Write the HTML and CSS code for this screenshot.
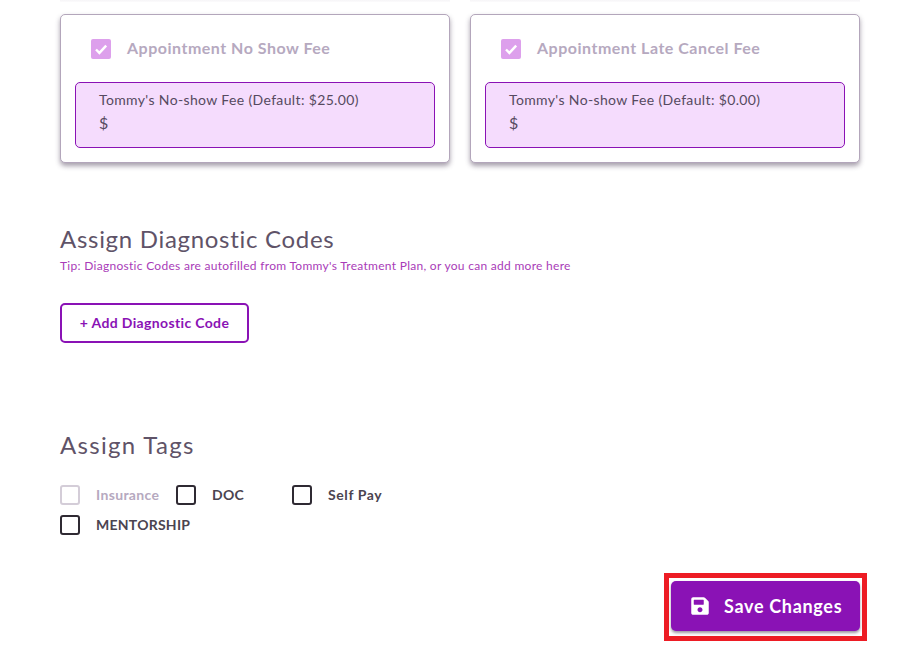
FILE: index.html
```html
<!DOCTYPE html>
<html lang="en">
<head>
<meta charset="utf-8">
<title>Appointment settings</title>
<link rel="stylesheet" href="styles.css">
</head>
<body>
<main class="page">
  <div class="fee-grid prev-row"><div class="prev-shadow"></div><div class="prev-shadow"></div></div>
  <section class="fee-grid">
    <div class="card">
      <div class="card-head">
        <span class="check"><svg viewBox="0 0 20 20" width="20" height="20"><path d="M5 10.500l3.400 3.400L15.200 6.600" fill="none" stroke="#fff" stroke-width="2.400"/></svg></span>
        <span class="card-title">Appointment No Show Fee</span>
      </div>
      <div class="fee-input">
        <div class="fee-label">Tommy's No-show Fee (Default: $25.00)</div>
        <div class="fee-value">$</div>
      </div>
    </div>
    <div class="card">
      <div class="card-head">
        <span class="check"><svg viewBox="0 0 20 20" width="20" height="20"><path d="M5 10.500l3.400 3.400L15.200 6.600" fill="none" stroke="#fff" stroke-width="2.400"/></svg></span>
        <span class="card-title">Appointment Late Cancel Fee</span>
      </div>
      <div class="fee-input">
        <div class="fee-label">Tommy's No-show Fee (Default: $0.00)</div>
        <div class="fee-value">$</div>
      </div>
    </div>
  </section>

  <section class="codes">
    <h2 class="heading">Assign Diagnostic Codes</h2>
    <p class="tip">Tip: Diagnostic Codes are autofilled from Tommy's Treatment Plan, or you can add more here</p>
    <button class="add-btn" type="button"><span class="add-label">+ Add Diagnostic Code</span></button>
  </section>

  <section class="tags">
    <h2 class="heading heading-tags">Assign Tags</h2>
    <div class="tag-list">
      <label class="tag tag-disabled"><span class="box"></span><span class="tag-text">Insurance</span></label>
      <label class="tag"><span class="box"></span><span class="tag-text">DOC</span></label>
      <label class="tag"><span class="box"></span><span class="tag-text tag-text-loose">Self Pay</span></label>
      <label class="tag tag-wide"><span class="box"></span><span class="tag-text">MENTORSHIP</span></label>
    </div>
  </section>

  <div class="actions">
    <div class="highlight">
      <button class="save-btn" type="button">
        <svg viewBox="0 0 448 512" width="18" height="20"><path fill="#fff" d="M433.900 129.900l-83.900-83.900A48 48 0 0 0 316.100 32H48C21.500 32 0 53.500 0 80v352c0 26.500 21.500 48 48 48h352c26.500 0 48-21.500 48-48V163.900a48 48 0 0 0-14.100-34zM224 416c-35.300 0-64-28.700-64-64 0-35.300 28.700-64 64-64s64 28.700 64 64c0 35.300-28.700 64-64 64zm96-304.500V212c0 6.600-5.400 12-12 12H76c-6.600 0-12-5.400-12-12V108c0-6.600 5.400-12 12-12h228.500c3.200 0 6.200 1.300 8.500 3.500l3.500 3.500c2.200 2.200 3.500 5.300 3.500 8.500z"/></svg>
        <span>Save Changes</span>
      </button>
    </div>
  </div>
</main>
</body>
</html>
```

FILE: styles.css
```css
* { box-sizing: border-box; }
html, body { margin: 0; background: #fff; }
body {
  font-family: "Lato", "Noto Sans", sans-serif;
  font-variant-ligatures: none;
  color: #5f5368;
  height: 670px;
  overflow: hidden;
}
.page {
  width: 918px;
  padding: 0 51px 0 60px;
}
.fee-grid {
  display: grid;
  grid-template-columns: 390px 390px;
  column-gap: 20px;
  width: 800px;
}
.prev-row {
  height: 2px;
  margin-bottom: 12px;
}
.prev-shadow {
  background: linear-gradient(#f6f5f7, #fcfbfc);
}
.card {
  height: 149px;
  background: #fff;
  border: 1px solid #b3a6bb;
  border-radius: 5px;
  box-shadow: 0 3px 5px rgba(60, 45, 70, 0.45);
  padding: 0 14px;
}
.card-head {
  display: flex;
  align-items: center;
  height: 67px;
  padding-left: 16px;
}
.check {
  width: 20px;
  height: 20px;
  border-radius: 2px;
  background: #dda0ec;
  display: block;
  margin-right: 16px;
}
.check svg { display: block; }
.card-title {
  font-size: 16px;
  line-height: 18px;
  margin-top: -2px;
  font-weight: 700;
  letter-spacing: 0.5px;
  color: #b6a9bf;
}
.fee-input {
  height: 66px;
  background: #f5dcfd;
  border: 1px solid #8a12b5;
  border-radius: 5px;
  padding: 8px 23px 0;
}
.fee-label {
  font-size: 14px;
  line-height: 17px;
  letter-spacing: 0.36px;
  color: #564a60;
}
.fee-value {
  font-size: 16px;
  line-height: 20px;
  margin-top: 5px;
  color: #564a60;
}
.heading {
  margin: 0;
  font-size: 24px;
  line-height: 30px;
  font-weight: 400;
  letter-spacing: 0.7px;
  color: #5f5368;
}
.heading-tags { letter-spacing: 1.3px; }
.codes { margin-top: 61px; }
.tip {
  margin: 5px 0 0;
  font-size: 12px;
  line-height: 14px;
  letter-spacing: 0.29px;
  color: #a93bb8;
}
.add-btn {
  display: flex;
  align-items: center;
  justify-content: center;
  margin-top: 30px;
  width: 189px;
  height: 40px;
  background: #fff;
  border: 2px solid #8a12b5;
  border-radius: 5px;
  font: 700 14px "Lato", "Noto Sans", sans-serif;
  font-variant-ligatures: none;
  letter-spacing: 0.35px;
  color: #8a12b5;
  padding: 0 0 2px;
}
.tags { margin-top: 87px; }
.tag-list {
  display: flex;
  flex-wrap: wrap;
  width: 400px;
  margin-top: 25px;
  row-gap: 10px;
}
.tag {
  display: flex;
  align-items: center;
  height: 20px;
  min-width: 116px;
  font-size: 14px;
  font-weight: 700;
  letter-spacing: 0.25px;
  color: #4b4450;
}
.tag-text { margin-top: -2px; }
.tag-text-loose { letter-spacing: 0.6px; }
.box {
  width: 20px;
  height: 20px;
  border: 2px solid #2f2a33;
  border-radius: 3px;
  margin-right: 16px;
  flex: none;
}
.tag-disabled { color: #b6a9bf; letter-spacing: 0.35px; }
.tag-disabled .box { border-color: #d4cdd8; }
.tag-wide { flex-basis: 100%; }
.actions {
  display: flex;
  justify-content: flex-end;
  width: 807px;
  margin-top: 38px;
}
.highlight {
  border: 5px solid #ed1c24;
  padding: 3px 2px 5px;
  width: 203px;
  height: 68px;
}
.save-btn {
  display: flex;
  align-items: center;
  gap: 15px;
  width: 189px;
  height: 50px;
  padding: 0 0 0 20px;
  border: 0;
  border-radius: 5px;
  background: #8a12b5;
  color: #fff;
  font: 700 18px "Lato", "Noto Sans", sans-serif;
  font-variant-ligatures: none;
  letter-spacing: 0.68px;
  box-shadow: 0 2px 3px rgba(60, 45, 70, 0.5);
}
.save-btn svg { flex: none; }
```
